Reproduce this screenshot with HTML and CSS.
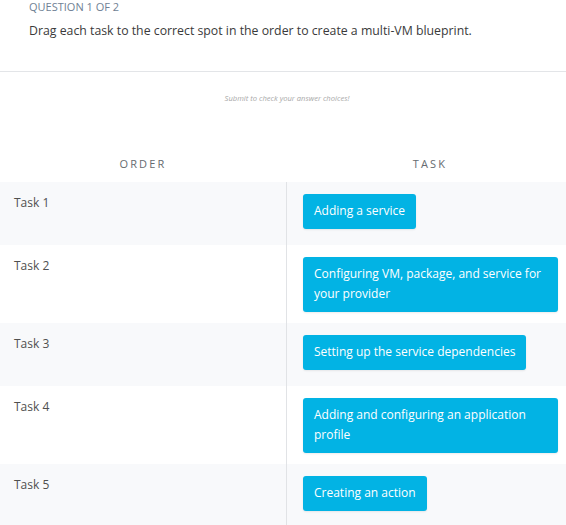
FILE: index.html
```html
<!DOCTYPE html>
<html>
<head>
<meta charset="utf-8">
<link rel="stylesheet" href="styles.css">
</head>
<body>
<div class="page">
  <header class="question">
    <div class="eyebrow">QUESTION 1 OF 2</div>
    <p class="prompt">Drag each task to the correct spot in the order to create a multi-VM blueprint.</p>
  </header>
  <div class="hint">Submit to check your answer choices!</div>
  <div class="table">
    <div class="head">
      <div class="th">ORDER</div>
      <div class="th">TASK</div>
    </div>
    <div class="row shaded">
      <div class="order">Task 1</div>
      <div class="task"><span class="chip">Adding a service</span></div>
    </div>
    <div class="row">
      <div class="order">Task 2</div>
      <div class="task"><span class="chip">Configuring VM, package, and service for your provider</span></div>
    </div>
    <div class="row shaded">
      <div class="order">Task 3</div>
      <div class="task"><span class="chip">Setting up the service dependencies</span></div>
    </div>
    <div class="row">
      <div class="order">Task 4</div>
      <div class="task"><span class="chip">Adding and configuring an application profile</span></div>
    </div>
    <div class="row shaded">
      <div class="order">Task 5</div>
      <div class="task"><span class="chip">Creating an action</span></div>
    </div>
  </div>
</div>
</body>
</html>
```

FILE: styles.css
```css
html, body {
  margin: 0;
  padding: 0;
  background: #ffffff;
  overflow: hidden;
}
body {
  font-family: "Open Sans", "Liberation Sans", sans-serif;
  color: #333;
}
.page {
  width: 574px;
}
.question {
  padding: 0 29px;
  border-bottom: 1px solid #e3e5e8;
  box-sizing: border-box;
  height: 72px;
}
.eyebrow {
  font-size: 11px;
  line-height: 14px;
  color: #6f7f94;
}
.prompt {
  margin: 8px 0 0;
  font-size: 12.3px;
  line-height: 18px;
  color: #3a3a3a;
}
.hint {
  text-align: center;
  font-style: italic;
  font-size: 7.6px;
  line-height: 10px;
  color: #a9a9a9;
  margin-top: 21px;
}
.table {
  margin-top: 43px;
}
.head {
  display: grid;
  grid-template-columns: 286px 1fr;
  height: 36px;
  align-items: center;
  padding-bottom: 1px;
  box-sizing: border-box;
}
.th {
  text-align: center;
  font-size: 11px;
  letter-spacing: 2.2px;
  color: #666b70;
}
.row {
  display: grid;
  grid-template-columns: 286px 1fr;
  min-height: 63px;
}
.row.shaded {
  background: #f8f9fb;
}
.order {
  padding: 12px 14px;
  font-size: 12px;
  line-height: 18px;
  color: #505050;
}
.task {
  border-left: 1px solid #e1e3e6;
  padding: 12px 16px 11px;
}
.chip {
  display: inline-block;
  background: #02b3e4;
  color: #fff;
  font-size: 12px;
  line-height: 20px;
  padding: 7px 11px 8px;
  border-radius: 3px;
  box-shadow: 0 1px 2px rgba(0, 0, 0, 0.08);
}
```
